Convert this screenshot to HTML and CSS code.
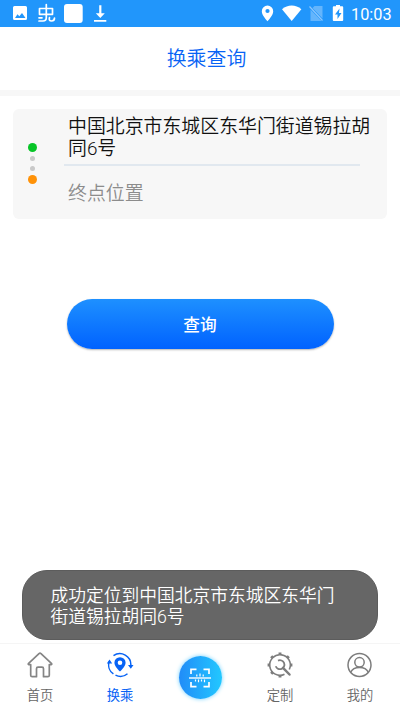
FILE: index.html
```html
<!DOCTYPE html>
<html lang="zh-CN">
<head>
<meta charset="utf-8">
<meta name="viewport" content="width=device-width">
<title>换乘查询</title>
<link rel="stylesheet" href="styles.css">
</head>
<body>
<div class="app">
  <div class="status">
    <svg class="status-icons" width="120" height="27" viewBox="0 0 120 27" fill="#fff">
      <path fill-rule="evenodd" d="M14.500 6h11a1.500 1.500 0 0 1 1.500 1.500v11a1.500 1.500 0 0 1-1.500 1.500h-11a1.500 1.500 0 0 1-1.500-1.500v-11a1.500 1.500 0 0 1 1.500-1.500zM15 18h10.500l-3.500-5-2.700 3.300-1.800-2.100z"/>
      <g fill="none" stroke="#fff" stroke-width="1.700" stroke-linecap="round" stroke-linejoin="round">
        <path d="M39.500 14.300V8.500h13v5.800zM46.300 4.500v13q0 3.500-3.300 3.500h-4M39 17.800h3M49.500 17.500q-1 3.500 2 3.500 3 0 3-3"/>
      </g>
      <rect x="64" y="4" width="18.700" height="19" rx="3"/>
      <path d="M99.200 5.300h2.200v8h3.400l-4.500 4.700-4.500-4.700h3.400zM94 20h12.300v1.800H94z"/>
    </svg>
    <svg class="status-icons" width="90" height="27" viewBox="258 0 90 27" fill="#fff">
      <path fill-rule="evenodd" d="M267.500 5.500a5.700 5.700 0 0 1 5.700 5.700c0 4.300-5.700 10-5.700 10s-5.700-5.700-5.700-10a5.700 5.700 0 0 1 5.700-5.700zm0 3.400a2.100 2.100 0 1 0 0 4.200 2.100 2.100 0 0 0 0-4.200z"/>
      <path d="M282 9.200c5.800-4.900 13.600-4.900 19.400 0L291.700 21z"/>
      <path opacity=".3" d="M314.500 6h8v12.500L312.500 8zM310.500 9.500l11 11.500h-11z"/>
      <path d="M309.500 6.500l13 14" fill="none" stroke="#8dc7fd" stroke-width="1.200"/>
      <path fill-rule="evenodd" d="M336 5h4v1.300h2.200q1 0 1 1V20q0 1-1 1h-8.400q-1 0-1-1V7.300q0-1 1-1h2.200zM339.500 8.500l-4.500 6h2.500v4.500l4-6H339z"/>
    </svg>
    <span class="clock">10:03</span>
  </div>
  <header class="header">换乘查询</header>
  <main class="main">
    <section class="route">
      <div class="dots"><i class="dot start"></i><i class="dot"></i><i class="dot"></i><i class="dot end"></i></div>
      <div class="fields">
        <div class="from">中国北京市东城区东华门街道锡拉胡同6号</div>
        <div class="line"></div>
        <div class="to">终点位置</div>
      </div>
    </section>
    <button class="search">查询</button>
    <div class="toast">成功定位到中国北京市东城区东华门街道锡拉胡同6号</div>
  </main>
  <nav class="tabs">
    <div class="tab">
      <svg width="28" height="28" viewBox="0 0 28 28" fill="none" stroke="#858585" stroke-width="1.700" stroke-linejoin="round" stroke-linecap="round"><path d="M4.700 13.600H2.600q-.8-.4 0-1.200L13 2.600q1-.8 2 0l10.400 9.800q.8.800 0 1.200h-2.100v10.600q0 1.500-1.500 1.500h-4.300v-8q0-1.500-1.500-1.500h-4q-1.500 0-1.500 1.500v8H6.200q-1.500 0-1.500-1.500z"/></svg>
      <span>首页</span>
    </div>
    <div class="tab">
      <svg width="28" height="28" viewBox="0 0 28 28" fill="#0763f5"><path fill-rule="evenodd" d="M14 6.200a5.600 5.600 0 0 1 5.600 5.600c0 3.800-5.600 8.700-5.600 8.700s-5.600-4.900-5.600-8.700A5.600 5.600 0 0 1 14 6.200zm0 3.200a2.300 2.300 0 1 0 0 4.600 2.300 2.300 0 0 0 0-4.600z"/><g fill="none" stroke="#0763f5" stroke-width="1.500"><path d="M7.500 4.700a11 11 0 0 1 17.300 9.800M3.200 10.500a11 11 0 0 0 4.200 12.400M9.500 24.200a11 11 0 0 0 12-1.400"/></g><path d="M22 14h5.500l-2.700 3.700zM.8 12.500l2.700-4 2.700 4z"/></svg>
      <span class="active">换乘</span>
    </div>
    <div class="tab">
      <div class="scan"><svg width="24" height="24" viewBox="0 0 24 24" fill="none" stroke="#fff"><path stroke-width="1.700" d="M3 8V3.300h5.500M15.500 3.300H21V8M3 16v4.700h5.500M15.500 20.700H21V16"/><path stroke-width="1.400" d="M1 12h22"/><path stroke-width="1.200" d="M8.800 8.500v2M12 7.500v3M15.200 8.500v2M7.500 13.500v2M10.500 13.500v2.700M13.500 13.500v2M16.500 13.500v2.700"/></svg></div>
    </div>
    <div class="tab">
      <svg width="28" height="28" viewBox="0 0 28 28" fill="none" stroke="#7d7d7d"><path stroke-width="1.600" d="M18.500 23.300A10.300 10.300 0 1 1 23.300 18.500"/><path stroke-width="2.900" d="M14 3.700V1.600M14 24.300v2.100M3.700 14H1.600M24.300 14h2.100M6.700 6.700L5.200 5.200M21.300 6.700l1.500-1.500M6.700 21.300l-1.500 1.500"/><path stroke-width="1.800" d="M12 9.600a4.500 4.500 0 1 1-2.300 5.700"/><path stroke-width="2.500" d="M17 16.800l6.500 6.700" stroke-linecap="round"/></svg>
      <span>定制</span>
    </div>
    <div class="tab">
      <svg width="28" height="28" viewBox="0 0 28 28" fill="none" stroke="#7d7d7d" stroke-width="1.500"><circle cx="13.500" cy="14" r="11.500"/><circle cx="13.500" cy="11.300" r="4.700"/><path d="M4.700 21.300c1.500-3.300 5-4.700 8.800-4.700s7.300 1.400 8.800 4.700"/></svg>
      <span>我的</span>
    </div>
  </nav>
</div>
</body>
</html>
```

FILE: styles.css
```css
* { box-sizing: border-box; }
body {
  margin: 0;
  background: #fff;
  font-family: Roboto, "Noto Sans CJK SC", sans-serif;
}
.app {
  display: flex;
  flex-direction: column;
  width: 400px;
  height: 711px;
  overflow: hidden;
}
.status {
  display: flex;
  flex: none;
  height: 26.5px;
  background: #2196fb;
}
.status-icons { flex: none; }
.status-icons + .status-icons { margin-left: 138px; }
.clock {
  margin-left: 3px;
  color: #fff;
  font-size: 16.300px;
  line-height: 29px;
  white-space: nowrap;
}
.header {
  flex: none;
  height: 69px;
  border-bottom: 6.500px solid #f7f7f7;
  color: #0763f5;
  font-size: 19.900px;
  font-weight: 350;
  line-height: 65px;
  padding-left: 13px;
  text-align: center;
}
.main {
  display: flex;
  flex: 1;
  flex-direction: column;
  align-items: center;
  padding-top: 13.500px;
}
.route {
  display: flex;
  width: 374px;
  height: 110px;
  border-radius: 6px;
  background: #f7f7f7;
}
.dots {
  display: flex;
  flex-direction: column;
  align-items: center;
  gap: 4.500px;
  width: 38px;
  padding-top: 33.500px;
}
.dot {
  flex: none;
  width: 5px;
  height: 5px;
  border-radius: 50%;
  background: #c9c9c9;
}
.start, .end { width: 9px; height: 9px; }
.start { background: #07c527; }
.end { background: #ff9208; }
.fields { width: 309px; margin-left: 13px; }
.from {
  height: 55px;
  padding: 7px 0 0 4px;
  color: #111;
  font-size: 18.900px;
  font-weight: 350;
  line-height: 22px;
}
.line {
  width: 296px;
  height: 2px;
  background: #e1e8ef;
}
.to {
  padding-left: 4px;
  color: #8c8c8c;
  font-size: 18.900px;
  font-weight: 350;
  line-height: 55px;
}
.search {
  width: 267px;
  height: 50px;
  margin-top: 80px;
  padding: 0;
  border: 0;
  border-radius: 25px;
  background: linear-gradient(#1e90ff, #0062ff);
  box-shadow: 0 1px 2px rgba(0, 0, 0, .3);
  color: #fff;
  font-family: inherit;
  font-size: 16.700px;
  font-weight: 500;
}
.toast {
  width: 356px;
  height: 70px;
  margin: auto 0 3px;
  padding: 15px 40px 0 27.500px;
  border: 1px solid #5c5c5c;
  border-radius: 25px;
  background: #666;
  color: #fff;
  font-size: 17.750px;
  font-weight: 350;
  line-height: 21px;
}
.tabs {
  display: flex;
  flex: none;
  height: 68px;
  border-top: 1px solid #f5f5f5;
}
.tab {
  display: flex;
  flex: 1;
  flex-direction: column;
  align-items: center;
  padding-top: 7px;
  color: #666;
  font-size: 13.300px;
  font-weight: 350;
  line-height: 20px;
}
.tab span { margin-top: 6.500px; }
.tab .active { color: #0763f5; font-weight: 400; }
.scan {
  display: grid;
  place-items: center;
  width: 43px;
  height: 43px;
  margin-top: 5px;
  border-radius: 50%;
  background: linear-gradient(90deg, #218cf8, #22c8ff);
  box-shadow: 0 0 4px #6fd0ff;
}
```
